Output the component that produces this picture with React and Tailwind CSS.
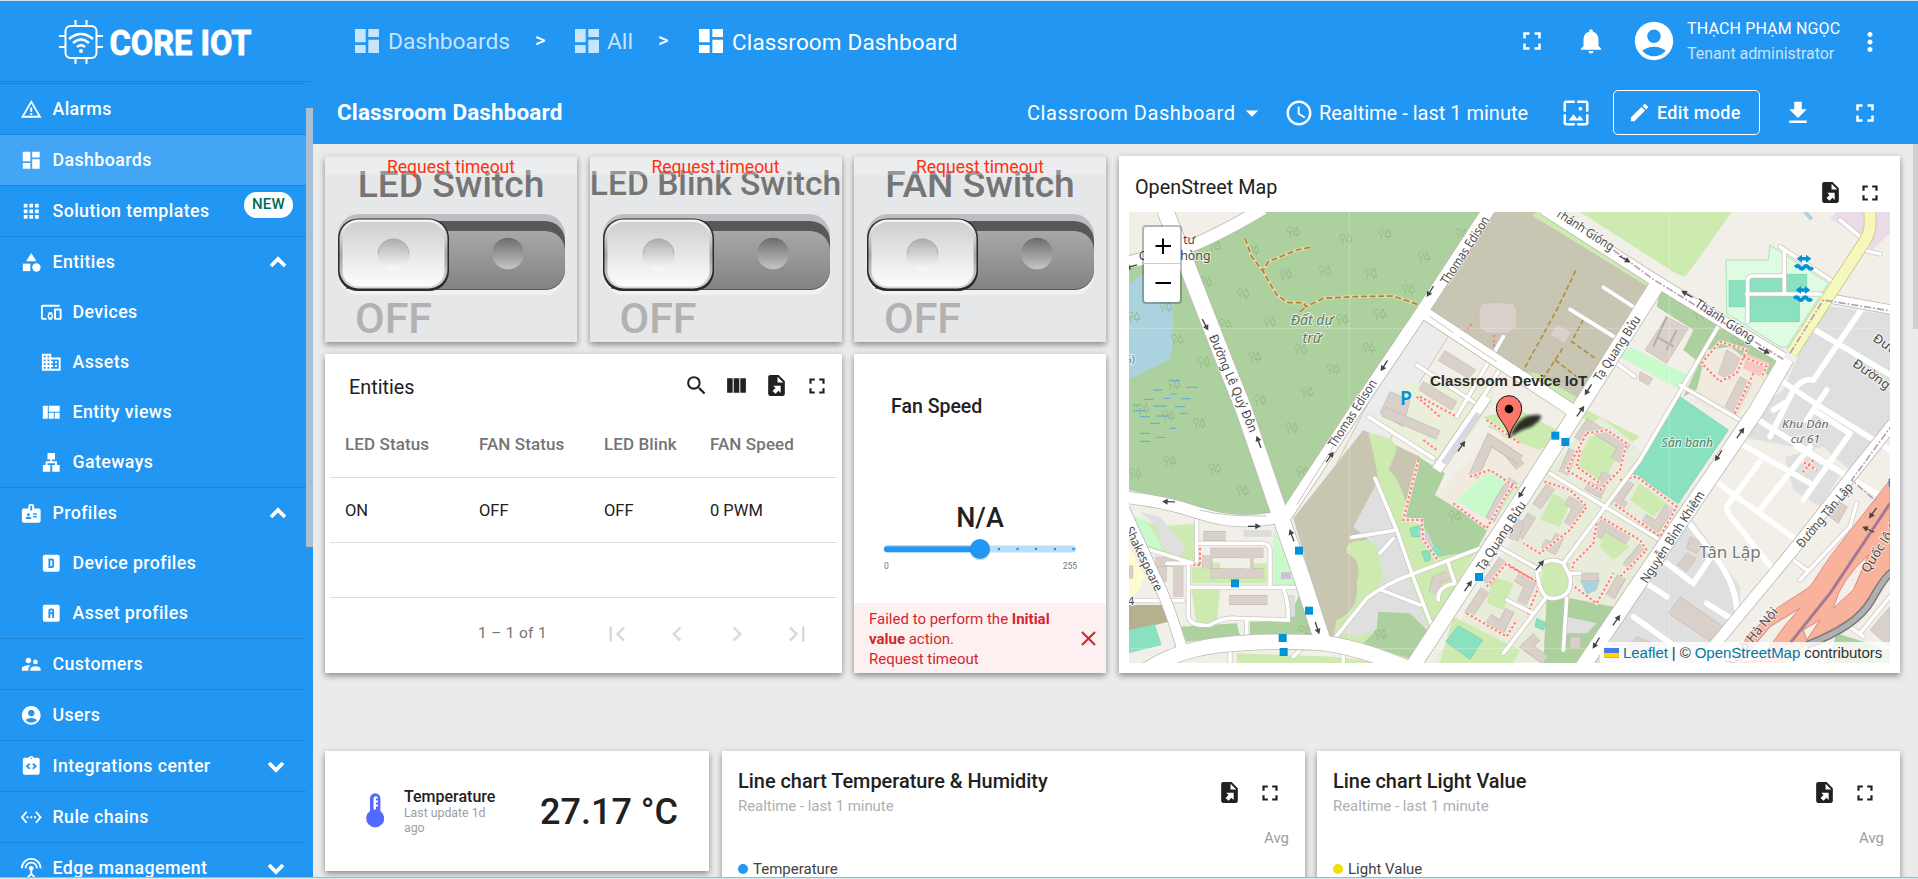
import React from "react";
import {
  MdWarningAmber, MdDashboard, MdApps, MdCategory, MdDevicesOther, MdDomain, MdViewQuilt, MdLan, MdBadge,
  MdSupervisorAccount, MdAccountCircle, MdIntegrationInstructions, MdSettingsEthernet, MdSettingsInputAntenna,
  MdFullscreen, MdNotifications, MdMoreVert, MdArrowDropDown, MdAccessTime, MdWallpaper, MdEdit, MdFileDownload,
  MdSearch, MdViewColumn, MdFirstPage, MdChevronLeft, MdChevronRight, MdLastPage, MdClose,
} from "react-icons/md";

const FileExport = ({ size = 25 }) => (
  <svg width={size} height={size} viewBox="0 0 24 24" fill="currentColor">
    <path d="M6 2c-1.1 0-2 .9-2 2v16c0 1.1.9 2 2 2h12c1.1 0 2-.9 2-2V8l-6-6H6m7 1.5L18.5 9H13V3.5m-4.07 8.72H16v7.05l-2.12-2.12L11.05 20l-2.83-2.83 2.83-2.83-2.12-2.12z" />
  </svg>
);

const BoxD = ({ size }) => (
  <svg width={size} height={size} viewBox="0 0 24 24" fill="currentColor" fillRule="evenodd">
    <path d="M5 3h14a2 2 0 0 1 2 2v14a2 2 0 0 1-2 2H5a2 2 0 0 1-2-2V5a2 2 0 0 1 2-2zM9 7v10h4a2 2 0 0 0 2-2V9a2 2 0 0 0-2-2H9zM11 9h2v6h-2V9z" />
  </svg>
);
const BoxA = ({ size }) => (
  <svg width={size} height={size} viewBox="0 0 24 24" fill="currentColor" fillRule="evenodd">
    <path d="M5 3h14a2 2 0 0 1 2 2v14a2 2 0 0 1-2 2H5a2 2 0 0 1-2-2V5a2 2 0 0 1 2-2zM11 7a2 2 0 0 0-2 2v8h2v-4h2v4h2V9a2 2 0 0 0-2-2h-2zM11 9h2v2h-2V9z" />
  </svg>
);

const menu = [
  { icon: MdWarningAmber, label: "Alarms" },
  { icon: MdDashboard, label: "Dashboards", active: true },
  { icon: MdApps, label: "Solution templates", badge: true },
  {
    icon: MdCategory, label: "Entities", open: true,
    children: [
      { icon: MdDevicesOther, label: "Devices" },
      { icon: MdDomain, label: "Assets" },
      { icon: MdViewQuilt, label: "Entity views" },
      { icon: MdLan, label: "Gateways" },
    ],
  },
  {
    icon: MdBadge, label: "Profiles", open: true,
    children: [
      { icon: BoxD, label: "Device profiles" },
      { icon: BoxA, label: "Asset profiles" },
    ],
  },
  { icon: MdSupervisorAccount, label: "Customers" },
  { icon: MdAccountCircle, label: "Users" },
  { icon: MdIntegrationInstructions, label: "Integrations center", closed: true },
  { icon: MdSettingsEthernet, label: "Rule chains" },
  { icon: MdSettingsInputAntenna, label: "Edge management", closed: true },
];

function Chevron({ up }) {
  return (
    <svg width="18" height="18" viewBox="0 0 18 18" fill="none" stroke="white" strokeWidth="3.8">
      <path d={up ? "M2 13 L9 6 L16 13" : "M2 6 L9 13 L16 6"} />
    </svg>
  );
}

function Sidebar() {
  return (
    <aside className="flex h-[877px] w-[313px] shrink-0 flex-col overflow-hidden bg-[#2196f3] text-white">
      <div className="flex h-[81px] shrink-0 items-center border-b border-[#1d84d6] pl-[58px] pt-[2px]">
        <svg width="200" height="60" viewBox="0 -6 200 60" fill="none" stroke="white" strokeWidth="2">
          <rect x="7.500" y="8" width="31" height="32" rx="5" />
          <path d="M17.500 2v6M28.500 2v6M17.500 40v6M28.500 40v6M1 18h6M1 29h6M39 18h6M39 29h6" />
          <path d="M11 21q12-10 24 0M15 25q8-7 16 0M19 29q4-3.500 8 0" strokeWidth="2.600" />
          <circle cx="23" cy="33" r="2" fill="white" stroke="none" />
          <text x="51.500" y="36.500" fill="white" stroke="white" strokeWidth="0.900" fontSize="34.500" fontWeight="700" textLength="142" lengthAdjust="spacingAndGlyphs">CORE IOT</text>
        </svg>
      </div>
      <div className="flex min-h-0 flex-1">
        <nav className="w-[306px] shrink-0 overflow-hidden pt-px">
          {menu.map((m) => (
            <div key={m.label} className="border-t border-[#1d84d6]">
              <div className={"flex h-[50px] items-center pl-[20px] pr-[19px] " + (m.active ? "bg-[#42a5f5]" : "")}>
                <m.icon size={22.5} className="shrink-0" />
                <span className="ml-[10px] whitespace-nowrap text-[17.8px] font-medium tracking-[0.4px]">{m.label}</span>
                {m.badge && (
                  <span className="ml-auto -mr-[6px] mb-[13px] flex h-[26px] w-[49px] items-center justify-center rounded-full bg-white text-[15px] font-medium tracking-[0.3px] text-[#00695c]">
                    NEW
                  </span>
                )}
                {m.open && <span className="ml-auto"><Chevron up /></span>}
                {m.closed && <span className="ml-auto mr-[2px]"><Chevron /></span>}
              </div>
              {(m.children || []).map((c) => (
                <div key={c.label} className="flex h-[50px] items-center pl-[40px]">
                  <c.icon size={22.5} />
                  <span className="ml-[10px] text-[17.8px] font-medium tracking-[0.4px]">{c.label}</span>
                </div>
              ))}
            </div>
          ))}
        </nav>
        <div className="w-[7px] pt-[26px]">
          <div className="h-[439px] bg-[#a9bfd4]" />
        </div>
      </div>
    </aside>
  );
}

function TopBar() {
  return (
    <header className="flex h-[80px] items-center text-white">
      <div className="flex w-[187px] items-center pl-[38px] text-white/75">
        <MdDashboard size={32} className="shrink-0" />
        <span className="ml-[5px] pt-[3px] text-[22.800px]">Dashboards</span>
      </div>
      <span className="ml-[35px] w-[27px] pb-[3px] text-[20px] font-medium">&gt;</span>
      <div className="ml-[9px] flex w-[75px] items-center text-white/75">
        <MdDashboard size={32} className="shrink-0" />
        <span className="ml-[4px] pt-[3px] text-[22.800px]">All</span>
      </div>
      <span className="ml-[12px] w-[27px] pb-[3px] text-[20px] font-medium">&gt;</span>
      <div className="ml-[10px] flex items-center">
        <MdDashboard size={32} />
        <span className="ml-[5px] whitespace-nowrap pt-[3px] text-[22.500px] tracking-[0.150px]">Classroom Dashboard</span>
      </div>
      <div className="ml-auto flex items-center">
        <MdFullscreen size={30} className="mr-[29px]" />
        <MdNotifications size={30} className="mr-[25px]" />
        <MdAccountCircle size={46} className="mr-[10px]" />
        <div className="w-[168px]">
          <div className="h-[25px] whitespace-nowrap text-[16px] leading-[24px] tracking-[0.150px]">THẠCH PHẠM NGỌC</div>
          <div className="h-[24px] whitespace-nowrap text-[16px] leading-[23px] tracking-[-0.050px] text-white/75">Tenant administrator</div>
        </div>
        <MdMoreVert size={30} className="mr-[33px] mt-px" />
      </div>
    </header>
  );
}

function ToolBar() {
  return (
    <div className="flex h-[63px] items-center pl-[24px] text-white">
      <h1 className="text-[22.500px] font-bold tracking-[0.120px]">Classroom Dashboard</h1>
      <div className="ml-auto flex items-center">
        <span className="w-[210px] whitespace-nowrap text-[20px] tracking-[0.550px]">Classroom Dashboard</span>
        <MdArrowDropDown size={30} />
        <MdAccessTime size={30} className="ml-[17px]" />
        <span className="ml-[5px] w-[210px] whitespace-nowrap text-[20px]">Realtime - last 1 minute</span>
        <MdWallpaper size={30} className="ml-[32px]" />
        <button className="ml-[22px] flex h-[45px] w-[147px] items-center rounded-[5px] border border-white pl-[14px] text-[18px] font-medium">
          <MdEdit size={23} />
          <span className="ml-[6px] whitespace-nowrap tracking-[0.300px]">Edit mode</span>
        </button>
        <MdFileDownload size={30} className="ml-[23px]" />
        <MdFullscreen size={30} className="ml-[37px] mr-[38px]" />
      </div>
    </div>
  );
}

const card = "bg-white shadow-[0_3px_6px_rgba(0,0,0,0.36),0_0_8px_rgba(0,0,0,0.07)] ";

function SwitchCard({ id, title, small }) {
  return (
    <section className={card + "relative flex h-[186px] w-[252px] flex-col items-center !bg-[#e6e7e9]"}>
      <div className={"flex h-[56px] items-end justify-center whitespace-nowrap pb-px font-medium text-[#757575] " + (small ? "text-[33.600px] leading-[54px]" : "text-[37.200px] leading-[54px]")}>
        {title}
      </div>
      <svg width="230" height="84" viewBox="0 0 230 84" className="mt-px">
        <defs>
          <linearGradient id={id + "o"} x1="0" y1="0" x2="0" y2="1"><stop offset="0.300" stopColor="#bdbcc0" /><stop offset="0.800" stopColor="#f1f1f2" /></linearGradient>
          <linearGradient id={id + "t"} x1="0" y1="0" x2="0" y2="1"><stop offset="0" stopColor="#a8a8a8" /><stop offset="1" stopColor="#838383" /></linearGradient>
          <linearGradient id={id + "k"} x1="0" y1="0" x2="0" y2="1"><stop offset="0" stopColor="#cfcfcf" /><stop offset="1" stopColor="#fdfdfd" /></linearGradient>
          <linearGradient id={id + "e"} x1="0" y1="0" x2="0" y2="1"><stop offset="0" stopColor="#f8f8f8" /><stop offset="0.500" stopColor="#a5a5a5" /><stop offset="1" stopColor="#d8d8d8" /></linearGradient>
          <linearGradient id={id + "d"} x1="0" y1="0" x2="0" y2="1"><stop offset="0" stopColor="#adadad" /><stop offset="1" stopColor="#fbfbfb" /></linearGradient>
          <linearGradient id={id + "r"} x1="0" y1="0" x2="0" y2="1"><stop offset="0" stopColor="#6c6c6c" /><stop offset="1" stopColor="#c6c6c6" /></linearGradient>
        </defs>
        <rect x="2" y="1" width="227" height="81" rx="21" fill={`url(#${id}o)`} />
        <rect x="10" y="8" width="219" height="69" rx="20" fill="#585858" />
        <path d="M10 18H209a20 20 0 0 1 20 20V56a20 20 0 0 1-20 20H10z" fill={`url(#${id}t)`} />
        <rect x="2" y="5.500" width="111" height="72.500" rx="20" fill="#2a2a2a" />
        <rect x="3.500" y="6.500" width="108" height="69" rx="19" fill={`url(#${id}e)`} />
        <rect x="6.500" y="9" width="102" height="64.500" rx="16" fill={`url(#${id}k)`} />
        <circle cx="57.500" cy="41.500" r="16" fill={`url(#${id}d)`} />
        <path d="M42 41.500a15.500 15.500 0 0 1 31 0" fill="none" stroke="#a9a9a9" strokeWidth="0.800" />
        <circle cx="172" cy="40.500" r="15.800" fill={`url(#${id}r)`} />
      </svg>
      <div className="w-full pl-[30px] text-[43px] font-medium leading-[43px] text-[#b3b1b2]">OFF</div>
      <div className="absolute inset-x-0 top-[2px] h-[17px] bg-white/25 text-center text-[17.500px] leading-[18px] text-[#ff3112]">Request timeout</div>
    </section>
  );
}

function EntitiesCard() {
  const cols = "grid grid-cols-[134px_125px_106px_1fr] pl-[15px] ";
  return (
    <section className={card + "flex h-[319px] w-[517px] flex-col px-[5px] text-[#212121]"}>
      <div className="flex h-[63px] items-center pl-[19px] pr-[7px] text-[20px]">
        <span className="pt-[5px] text-[19.800px]">Entities</span>
        <div className="ml-auto flex gap-[15px] pt-px">
          <MdSearch size={25} /><MdViewColumn size={25} /><FileExport /><MdFullscreen size={26} />
        </div>
      </div>
      <div className={cols + "h-[61px] items-center border-b border-[#dedede] pb-[5px] text-[17px] font-medium tracking-[0.100px] text-[#757575]"}>
        <span>LED Status</span><span>FAN Status</span><span>LED Blink</span><span>FAN Speed</span>
      </div>
      <div className={cols + "h-[65px] items-center border-b border-[#dedede] pt-[2px] text-[16.500px]"}>
        <span>ON</span><span>OFF</span><span>OFF</span><span>0 PWM</span>
      </div>
      <div className="h-[55px] border-b border-[#dedede]" />
      <div className="flex h-[71px] items-center pl-[148px] text-[15.500px] tracking-[0.300px] text-[#757575]">
        <span className="w-[124px]">1 – 1 of 1</span>
        <div className="flex gap-[30px] text-[#dadada]">
          <MdFirstPage size={30} /><MdChevronLeft size={30} /><MdChevronRight size={30} /><MdLastPage size={30} />
        </div>
      </div>
    </section>
  );
}

function FanCard() {
  return (
    <section className={card + "flex h-[319px] w-[252px] flex-col text-[#212121]"}>
      <div className="pl-[37px] pt-[38px] text-[19.500px] font-medium leading-[30px]">Fan Speed</div>
      <div className="mt-[78px] text-center text-[27px] font-medium leading-[36px]">N/A</div>
      <svg width="252" height="24" className="mt-px shrink-0">
        <rect x="30" y="8.500" width="192" height="7" rx="3.500" fill="#bbdefb" />
        <rect x="30" y="8.500" width="96" height="7" rx="3.500" fill="#90caf9" />
        <rect x="30" y="9.500" width="96" height="5.500" rx="2.750" fill="#2196f3" />
        {[145, 163.500, 182, 201, 219.500].map((x) => <circle key={x} cx={x} cy="12" r="1.300" fill="#2196f3" />)}
        <circle cx="126" cy="12.800" r="10.400" fill="#1976d2" opacity="0.250" />
        <circle cx="126" cy="12" r="10" fill="#2196f3" />
      </svg>
      <div className="flex justify-between pl-[30px] pr-[29px] text-[8.500px] leading-[10px] text-[#757575]"><span>0</span><span>255</span></div>
      <div className="mt-auto flex h-[70px] items-center rounded-[4px] bg-[#fdf0f0] pl-[15px] pt-px text-[15px] leading-[20px] text-[#d12730]">
        <div className="w-[207px]">Failed to perform the <b className="font-bold">Initial value</b> action.<br />Request timeout</div>
        <MdClose size={25} className="shrink-0" />
      </div>
    </section>
  );
}

/* ---------- Map ---------- */
const trees = [
  [285, 288], [400, 300], [520, 245], [678, 266], [795, 252], [1025, 250], [912, 320], [498, 372], [615, 362], [753, 370], [866, 418],
  [370, 430], [258, 396], [42, 500], [316, 522], [450, 516], [668, 508], [780, 492], [138, 470], [172, 568], [252, 635], [405, 620],
  [543, 598], [640, 657], [747, 594], [562, 725], [420, 750], [162, 702], [70, 775], [146, 797], [238, 820], [515, 833], [150, 932],
  [285, 955], [46, 970], [368, 1022], [548, 965], [1005, 1098], [555, 1442], [782, 1453], [1740, 492], [1855, 574],
];
const Tree = ({ x, y }) => (
  <g transform={`translate(${x} ${y})`} fill="none" stroke="#92b886" strokeWidth="2.600">
    <path d="M-10 -14a8 8 0 1 0 .1 0M-10 4V17M9 -15L0 8H18ZM9 8V17" />
  </g>
);
const major = [
  ["M135 180L195 330L300 600L372 780L480 1095L545 1280L610 1480", 48],
  ["M10 340Q120 315 190 295T430 176", 36],
  ["M1108 176L905 486L700 790L495 1100", 36],
  ["M1270 176L1600 388L1990 625", 34],
  ["M875 1555L1180 1085L1400 740L1620 390", 44],
  ["M1385 1555L1570 1280L1910 780L2000 625", 44],
  ["M900 480L1090 605L1385 800", 36],
  ["M10 1042Q120 1050 240 1090T490 1098", 34],
  ["M80 1560Q170 1500 300 1485T600 1478Q720 1490 900 1570", 44],
  ["M5 1060L110 1290Q150 1370 190 1510", 30],
  ["M1730 1550L2020 1200L2200 970L2320 820", 32],
  ["M2100 440L2320 480", 26],
  ["M950 960L1100 740", 30],
];
const minor = [
  "M230 1110V1235M60 1190L220 1240H205V1400Q210 1430 270 1425Q310 1400 350 1405L505 1410Q505 1350 490 1315M205 1312H540M240 1180H430Q450 1185 450 1200V1310M140 1240H210M27 1352H190M380 1410V1470",
  "M765 985L830 1140Q880 1290 940 1440M695 1162L820 1142M780 1210L820 1165M640 1470L740 1345Q800 1300 870 1275L1080 1195M780 1318L900 1365M985 1240L1005 1300Q950 1310 955 1350",
  "M745 800L940 925M890 645L1090 775M1150 560L1010 800M1150 640L1090 740",
  "M1450 412L1540 470M1350 478L1490 565M1490 640L1545 680",
  "M1800 520L1560 930L1330 1240M1680 705L1860 810M1290 970L1620 1170M1100 1170L1260 1260M1330 1240Q1280 1215 1250 1260Q1260 1350 1300 1345Q1360 1340 1350 1280ZM1350 1270H1380M1340 1345L1330 1500M1160 1350L1240 1390M1150 1510L1280 1340",
  "M1980 290L2140 395M1993 300V430M1883 515V390Q1883 380 1895 378H1990M1880 432H2100",
  "M2085 540L2320 680M2230 470L2080 690Q2040 680 2010 740L1950 860M1980 690L2100 770L2310 900M2120 720L2060 810M2030 890L2320 1060",
  "M1860 880L2070 1000M1920 935L1820 1070Q1820 1090 1840 1110L1960 1260M1780 990L2030 1170M2190 850L2050 1050M2070 890L1920 1080M1900 800L2200 990M1960 780L1990 760M2080 780L2190 850",
  "M1700 1110L1800 1240Q1860 1330 1850 1420M1640 1240L1720 1300L1780 1210M1540 1400L1680 1500M1580 1300L1640 1340M1760 1360L1840 1410",
  "M2210 1060L2190 1130L2040 1290M2020 1230L2060 1260M2220 1450L2310 1340M2190 1430L2230 1460",
  "M2160 210L2220 260M2230 300L2280 312M330 1480V1540M520 1520L540 1500M670 1490V1540",
];
const blocks10 = [
  "M160 190L190 120", "M205 90L235 45L340 110L315 150", "M230 225L265 245L290 190", "M345 290L320 275L360 215", "M400 325L440 350L480 290",
  "M80 290L122 230", "M170 270L205 290L175 345", "M25 380L65 315", "M100 400L130 415L150 375", "M260 380L280 345L355 390", "M350 470L400 410",
  "M300 560L335 500", "M20 500L60 525L35 580", "M80 680L50 710L105 750", "M-10 120L30 170", "M-60 330L-30 270L10 210",
];
const blocks9 = [
  "M270 428H430M270 490H430M385 430V490M262 435V475", "M328 570H442", "M175 465V560M105 455H185M125 470V515", "M250 378H318",
  "M790 5L955 75", "M1060 200L1110 90L1200 150", "M940 550L950 510L985 495", "M1100 520L1150 450", "M1045 615L1095 540", "M1105 625L1145 650L1170 600", "M1180 390L1200 330",
];
const reds = [
  "M1745 640L1800 575L1880 600L1850 670L1800 695ZM1870 620L1940 650L1925 680M1900 670L1840 800",
  "M895 930L850 1110H905L910 1170L960 1240M1050 980L1110 960L1200 1020M1000 1060L1100 1135L1180 1000M900 740L1010 800M890 740L960 800M910 870L950 900",
  "M1400 850L1460 840L1520 880L1500 960L1440 1020L1340 960ZM1500 990L1550 980L1670 1070L1620 1160L1480 1060M1260 990L1350 1020L1400 1070L1350 1140L1260 1210L1210 1180M1440 1100L1560 1170L1580 1200L1500 1280M1430 1120L1420 1180L1360 1240L1350 1300L1430 1360L1480 1270M1170 1250L1260 1300L1220 1400M1040 1390L1160 1460L1190 1410M1100 1310L1160 1240L1240 1290M1100 810L1200 880M1380 900L1370 950L1440 1000M240 1180V1250M205 1245H240M2040 930L2090 960M2080 930L2045 970",
];
const Arrow = ({ x, y, a }) => (
  <g transform={`translate(${x} ${y}) rotate(${a})`} stroke="#444" strokeWidth="4" fill="#444">
    <path d="M-20 0H4" /><path d="M2 -9L19 0L2 9Z" stroke="none" />
  </g>
);
const Label = ({ x, y, a = 0, s = 38, children, fill = "#4a4a4a", w, italic }) => (
  <text transform={`translate(${x} ${y}) rotate(${a})`} textAnchor="middle" fontSize={s} fill={fill} stroke="#ffffff" strokeOpacity="0.650" strokeWidth="6" paintOrder="stroke" textLength={w} lengthAdjust="spacingAndGlyphs" fontStyle={italic ? "italic" : "normal"}>{children}</text>
);

function OsmMap() {
  return (
    <svg width="761" height="451" viewBox="27 186 2283 1353" fontFamily="'Noto Sans', sans-serif" className="block">
      <defs><filter id="soft" x="-50%" y="-50%" width="200%" height="200%"><feGaussianBlur stdDeviation="5" /></filter></defs>
      <rect x="27" y="186" width="2283" height="1353" fill="#f2efe9" />
      {/* land cover */}
      <path d="M27 350L190 310L320 250L430 186H1090L500 1090L370 1110L200 1060L27 1020Z" fill="#add19e" />
      <path d="M27 405L66 372L158 440V590L150 628L27 688Z" fill="#aad3df" />
      <path d="M1125 186H1280L1600 395L1380 780L920 475Z" fill="#c8c6b3" />
      <path d="M1250 186H1290L1600 390L1585 410L1235 196Z" fill="#cdebb0" />
      <path d="M1380 186H1835L1740 320L1695 380L1670 372Z" fill="#cdebb0" />
      <path d="M1620 420L1990 640L1950 720L1800 680L1690 740L1790 530Z" fill="#add19e" />
      <path d="M1630 440L1700 480L1760 560L1740 640L1680 700L1530 640L1570 530Z" fill="#f2efe9" />
      <path d="M1620 420L1815 530L1740 640L1690 600L1720 540L1610 470Z" fill="#add19e" />
      <path d="M1530 590L1715 680L1670 715L1500 620Z" fill="#c8facc" />
      <path d="M1500 640L1680 740L1540 900L1420 800Z" fill="#f2efe9" />
      <path d="M1760 600L1830 590L1950 680L1850 800L1720 760Z" fill="#f0eadf" />
      <path d="M1818 330H1945L1950 285L2125 400L2000 592L1980 590L1820 490Z" fill="#dffce2" stroke="#a5e5b5" strokeWidth="3" />
      <path d="M1827 392H1880V470H1827ZM1890 383H1985V425H1890ZM1998 373H2060V425H1998ZM1890 437H2038V515H1890Z" fill="#8ae1bf" stroke="#72cda9" strokeWidth="2" />
      <path d="M2150 186H2310V250L2255 300L2220 262L2130 205Z" fill="#ebdbe8" />
      <path d="M2100 465L2310 495V840L2200 970L2120 900L1990 720Z" fill="#dfdfdf" />
      <path d="M1990 720L2150 880L2070 900L1860 860L1910 780Z" fill="#e0dfdf" />
      <path d="M1995 920L2080 900L2170 960L2100 1070L2020 1020Z" fill="#e0dfdf" />
      <path d="M1700 1100L1720 1110L1860 1310V1400L1750 1539H1400L1550 1310Z" fill="#dfdfdf" />
      <path d="M905 500L985 560L840 790L790 930L650 940L760 730Z" fill="#ececec" stroke="#d7c6ad" strokeWidth="3" />
      <path d="M520 1105L730 840L900 920L860 1100L790 1290L650 1450L625 1470Z" fill="#c8c5b1" />
      <path d="M745 850Q830 860 830 900L805 960Q845 985 870 1110L1070 1200L880 1530L640 1460L650 1410Q720 1380 710 1300Q730 1230 680 1210Q670 1170 740 1170L790 1060L775 990Q760 900 745 850Z" fill="#cdebb0" />
      <path d="M770 1000L830 1140L870 1290L930 1450L880 1500L770 1440L700 1460L660 1440L770 1320L790 1280L770 1190L700 1130Z" fill="#dfdfdf" />
      <path d="M775 1385L870 1390L930 1450L880 1530L730 1480L770 1440Z" fill="#add19e" />
      <path d="M895 920L975 970L945 1035L1105 1135L1070 1200L960 1220L900 1110L850 1100Z" fill="#add19e" />
      <path d="M1100 880L1200 850L1290 900L1105 1135L950 1035Z" fill="#f0eadf" />
      <path d="M1110 960L1200 1000L1120 1120L1010 1050Z" fill="#c8facc" />
      <path d="M1090 800L1180 780L1290 850L1260 900L1150 860Z" fill="#cdebb0" />
      <path d="M1370 800L1170 660L1250 670L1400 760Z" fill="#cdebb0" />
      <path d="M870 700L1010 690L1130 690L1120 760L1050 860L960 940L780 820L800 740Z" fill="#e9efd8" />
      <path d="M1100 830L1200 780L1330 850L1290 900L1180 860Z" fill="#cdebb0" />
      <path d="M1400 780L1560 860L1530 880L1380 800Z" fill="#cdebb0" />
      <path d="M1380 850L1440 800L1530 870L1700 1060L1560 1330L1400 1530L1100 1539L940 1539L1200 1130L1290 960Z" fill="#e8eddb" />
      <path d="M1410 860L1470 850L1500 900L1450 1000L1360 950Z M1560 1000L1640 1060L1600 1100L1530 1050ZM1300 1030L1350 1060L1320 1130L1260 1110ZM1450 1140L1530 1190L1480 1230L1440 1190ZM1120 1280L1180 1300L1150 1380L1100 1360ZM1000 1400L1200 1500L1180 1540H960ZM1270 1240L1350 1240L1350 1340H1260Z" fill="#cdebb0" />
      <path d="M1280 1345H1350L1480 1370L1395 1539H1270Z" fill="#add19e" /><path d="M1340 1400L1430 1420L1400 1450H1340Z" fill="#dfdfdf" />
      <path d="M1380 1290H1440L1430 1320L1400 1335Z" fill="#aad3df" />
      <path d="M1680 740L1825 840L1675 1060L1530 965Z" fill="#8ae1bf" stroke="#72cda9" strokeWidth="2" />
      <path d="M1015 1427L1088 1470L1050 1528L977 1475ZM1250 1405L1280 1420L1270 1440L1245 1430ZM870 1135L905 1125L900 1160L875 1160ZM905 1205L930 1200L930 1230L915 1235ZM935 1195L950 1185L968 1210L950 1225Z" fill="#8ae1bf" stroke="#72cda9" strokeWidth="2" />
      <path d="M27 1095L120 1130L230 1120V1240L70 1200L27 1120Z" fill="#cdebb0" />
      <path d="M27 1095L80 1110L130 1200L60 1180Z" fill="#c8facc" /><path d="M60 1085L120 1100L195 1190L180 1220L130 1195L110 1130Z" fill="#dfdfdf" />
      <path d="M460 1130L530 1305H460Z" fill="#c8facc" /><path d="M215 1240H440V1300H215ZM215 1320H300L290 1420L230 1430Z" fill="#cdebb0" />
      <path d="M180 1430L350 1420L360 1455L200 1475ZM390 1415L500 1415L540 1330L590 1450L390 1455Z" fill="#add19e" />
      <path d="M27 1190L75 1280L50 1330L27 1340Z" fill="#fdfcd0" /><path d="M27 1365H130L145 1415L27 1445Z" fill="#b5b18d" />
      <path d="M27 1440L105 1423L125 1485L27 1510Z" fill="#8ae1bf" /><path d="M350 1510L640 1520L800 1539H350Z" fill="#cdebb0" />
      <path d="M370 1140H455V1160H370ZM505 1335H525V1400H505Z" fill="#dddcdc" /><path d="M483 1267H512V1287H483Z" fill="#d7b9dc" />
      <path d="M895 1140L925 1150L940 1190L915 1190L900 1165Z" fill="#d3cfdd" />
      <path d="M2150 1450L2310 1500V1539H2120Z" fill="#add19e" />
      {/* buildings */}
      <g fill="#d9d0c9" stroke="#c5b9af" strokeWidth="2">
        <path d="M1085 460Q1130 455 1180 460L1190 480V530L1165 550H1100L1077 530V480Z" />
        <path d="M1640 500L1705 535L1640 640L1575 600Z" /><path d="M1310 522L1355 545L1335 580L1290 555Z" />
        <path d="M975 602L1068 660L1045 685L955 632ZM910 695L1010 755L995 780L897 720ZM810 725L870 750L850 830L780 790Z" />
        <path d="M1560 665L1598 685L1585 705L1558 690ZM1820 600L1860 625L1830 690L1795 672ZM1860 680L1895 700L1850 790L1815 770Z" />
        <path d="M1680 1340L1810 1430L1780 1480L1645 1390ZM1550 1460L1600 1480L1570 1530L1520 1500ZM1700 1210L1728 1225L1700 1265L1672 1245ZM1710 1160L1750 1180L1730 1210L1700 1195Z" />
        <path d="M2155 1055L2182 1070L2155 1120L2128 1100ZM2250 1440L2310 1370V1490ZM1350 1460H1382V1495H1350ZM1385 1270H1435V1292H1385ZM27 1248H38V1285H27Z" />
      </g>
      <path d="M1880 610L1950 640L1930 685L1870 655Z" fill="#f5c9c2" /><path d="M1640 500L1600 590M1670 540L1640 600M1610 560L1660 590" stroke="#b9aca3" strokeWidth="6" fill="none" />
      <g transform="translate(1170 780)" fill="none">{blocks10.map((d) => <g key={d}><path d={d} stroke="#c5b9af" strokeWidth="30" /><path d={d} stroke="#d9d0c9" strokeWidth="26" /></g>)}</g>
      <g transform="translate(0 780)" fill="none">{blocks9.map((d) => <g key={d}><path d={d} stroke="#c5b9af" strokeWidth="30" /><path d={d} stroke="#d9d0c9" strokeWidth="26" /></g>)}</g>
      <path d="M430 1225H390V1255H300V1225H385Z" fill="#f2efe9" />
      {trees.map(([x, y]) => <Tree key={x + "-" + y} x={x} y={y} />)}
      <path d="M150 692h30M200 712h32M100 720h26M150 732h20M70 748h30M130 745h22M184 746h28M40 766h20M100 768h40M165 770h30M40 782h36M110 798h40M180 790h22M60 800h30M90 820h30M150 835h20M60 850h28M110 862h26M60 874h30" stroke="#5fa8d8" strokeWidth="3" fill="none" />
      {/* paths */}
      <path d="M375 265L395 320L430 365L470 435L505 458L550 458L558 470L610 445L700 440L820 438L895 464M570 292L530 300L445 335L430 360M540 485L558 470" fill="none" stroke="#ddd9b8" strokeWidth="10" />
      <path d="M375 265L395 320L430 365L470 435L505 458L550 458L558 470L610 445L700 440L820 438L895 464M570 292L530 300L445 335L430 360M540 485L558 470" fill="none" stroke="#b08327" strokeWidth="5" strokeDasharray="18 8" />
      <path d="M1367 362L1310 480L1205 670M1390 508L1355 575L1430 628M1328 595L1305 630L1270 685M1305 630L1370 680" fill="none" stroke="#b08f40" strokeWidth="5" strokeDasharray="16 8" />
      <g fill="none" stroke="#fbe9e4" strokeWidth="10">{reds.map((d) => <path key={d} d={d} />)}</g>
      <g fill="none" stroke="#f97f73" strokeWidth="6" strokeDasharray="7 7">{reds.map((d) => <path key={d} d={d} />)}<path d="M1055 522L1030 550M1122 555V610" /></g>
      {/* roads */}
      <g fill="none" stroke="#c9c4be" strokeWidth="15" strokeLinecap="round">{minor.map((d) => <path key={d} d={d} />)}</g>
      <g fill="none" stroke="#ffffff" strokeWidth="11" strokeLinecap="round">{minor.map((d) => <path key={d} d={d} />)}</g>
      <g fill="none" stroke="#ffffff" strokeWidth="17" strokeLinecap="round">{minor.slice(6, 9).map((d) => <path key={d} d={d} />)}</g>
      <g fill="none" strokeLinejoin="round">
        {major.map(([d, w]) => <path key={d} d={d} stroke="#bfbab4" strokeWidth={w + 5} />)}
        <path d="M1850 1539L1880 1460L1970 1375L2070 1310L2130 1220L2310 990V1265L2200 1400L2060 1480L1970 1560Z" fill="#f9b29c" stroke="#dd9080" strokeWidth="3" />
        {major.map(([d, w]) => <path key={d} d={d} stroke="#ffffff" strokeWidth={w} />)}
        <path d="M2250 176V225Q2250 250 2230 280L2015 610" stroke="#c5c795" strokeWidth="38" />
        <path d="M2250 176V225Q2250 250 2230 280L2015 610" stroke="#f5f8ba" strokeWidth="33" />
      </g>
      <path d="M930 500L1000 548M1020 562L1130 635M530 1065L640 890M240 1080Q310 1100 440 1098" fill="none" stroke="#c9c4be" strokeWidth="3" />
      <path d="M1860 1539L1950 1430L2040 1375L2000 1420L1920 1530ZM2140 1375Q2160 1290 2245 1215L2200 1320ZM2050 1440L2100 1410L2060 1470Z" fill="#f2efe9" stroke="#d98a7a" strokeWidth="3" />
      <path d="M2010 1480L2130 1330L2310 1060" fill="none" stroke="#b78492" strokeWidth="10" />
      <path d="M2010 1480L2130 1330L2310 1060" fill="none" stroke="#8e6a8e" strokeWidth="3" />
      <path d="M2060 1485Q2210 1430 2255 1350T2320 1265" fill="none" stroke="#777777" strokeWidth="24" />
      <path d="M2060 1485Q2210 1430 2255 1350T2320 1265" fill="none" stroke="#b0b0b0" strokeWidth="16" />
      <path d="M1480 300L1600 388L1990 628M2010 610L2110 450L2320 484M2320 820L2195 990L2270 1055" fill="none" stroke="#b99dbb" strokeWidth="5" strokeDasharray="22 6 5 6" />
      <path d="M1075 790L970 940" stroke="#d7d7e5" strokeWidth="16" fill="none" />
      <path d="M2055 186L2075 208" stroke="#aad3df" strokeWidth="12" />
      <path d="M688 186V1539M1648 186V1539M27 535H2310M27 1496H2310" stroke="#fff" strokeOpacity="0.350" strokeWidth="2.500" />
      {[[256, 525, 62], [930, 425, 122], [792, 648, 122], [416, 875, 250], [630, 920, 305], [145, 1055, 182], [404, 1129, 0], [515, 1155, 250], [592, 1435, 72], [1025, 888, 305], [1515, 328, 30], [1700, 432, 210], [1933, 602, 28], [1404, 720, 122], [1382, 783, 305], [1205, 1028, 122], [1045, 1307, 305], [1862, 848, 305], [1795, 918, 122], [1490, 1410, 305], [1428, 1480, 122], [1260, 1245, 310], [2258, 1090, 125], [2244, 1138, 205], [32, 350, 165]].map(([x, y, a]) => <Arrow key={x} x={x} y={y} a={a} />)}
      <g fill="#0092da">{[[537, 1202], [345, 1300], [567, 1382], [488, 1464], [491, 1506], [1077, 1281], [1306, 857], [1336, 876], [2318, 998]].map(([x, y]) => <rect key={x} x={x - 12} y={y - 12} width="24" height="24" />)}</g>
      {[[2052, 336], [2049, 430]].map(([x, y]) => (
        <g key={y} transform={`translate(${x} ${y})`} fill="none" stroke="#0092da" strokeWidth="10">
          <path d="M-12 -10H12" /><path d="M-6 -22L-22 -10L-6 2ZM6 -22L22 -10L6 2Z" fill="#0092da" stroke="none" />
          <path d="M-26 16q7 -9 13 0t13 0t13 0t13 0" strokeWidth="11" />
        </g>
      ))}
      {/* labels */}
      <Label x={170} y={282} s={36} w={112}>Đầu tư</Label><Label x={164} y={329} s={36} w={216}>Công phòng</Label>
      <Label x={576} y={526} s={42} fill="#5f7a5c" italic>Đất dự</Label><Label x={576} y={580} s={42} fill="#5f7a5c" italic>trữ</Label>
      <Label x={1046} y={308} a={-57} w={235}>Thomas Edison</Label><Label x={708} y={798} a={-57} w={235}>Thomas Edison</Label>
      <Label x={328} y={705} a={67} w={315}>Đường Lê Quý Đôn</Label>
      <Label x={1388} y={250} a={33} w={200}>Thánh Gióng</Label><Label x={1808} y={523} a={33} w={205}>Thánh Gióng</Label>
      <Label x={1502} y={602} a={-57} w={225}>Tạ Quang Bửu</Label><Label x={1154} y={1165} a={-57} w={240}>Tạ Quang Bửu</Label>
      <Label x={1668} y={1168} a={-57} w={320}>Nguyễn Bỉnh Khiêm</Label><Label x={2124} y={1104} a={-50} w={240}>Đường Tân Lập</Label>
      <Label x={60} y={1232} a={64} w={210}>Shakespeare</Label>
      <Label x={1702} y={890} s={36} w={155} fill="#4c8470" italic>Sân banh</Label>
      <Label x={2056} y={835} s={34} w={140} fill="#686868" italic>Khu Dân</Label><Label x={2056} y={878} s={34} w={88} fill="#686868" italic>cư 61</Label>
      <Label x={1830} y={1224} s={50} w={185} fill="#777777">Tân Lập</Label>
      <Label x={2269} y={698} a={35} w={180}>Đường số</Label><Label x={2330} y={622} a={35} w={180}>Đường số</Label>
      <Label x={1905} y={1470} a={-50} w={220}>Xa lộ Hà Nội</Label><Label x={2290} y={1200} a={-57} w={170}>Quốc lộ 1</Label>
      <Label x={33} y={1366} s={34}>4</Label><Label x={30} y={640} s={34} fill="#5784a8">S)</Label>
      <text x="840" y="766" fontSize="58" fontWeight="600" fill="#0092da">P</text>
      {/* marker */}
      <path d="M1170 862Q1190 800 1240 795T1235 830Q1205 838 1170 862Z" fill="#111" opacity="0.850" filter="url(#soft)" />
      <path d="M1168 864C1165 825 1129 808 1129 775a38 38 0 0 1 76 0C1205 808 1171 825 1168 864Z" fill="#fe7569" stroke="#111" strokeWidth="3" />
      <circle cx="1167" cy="777" r="13" fill="#000" />
      <text x="1166" y="708" textAnchor="middle" fontFamily="'Liberation Sans', sans-serif" fontWeight="700" fontSize="45" fill="#2b2b2b" textLength="472" lengthAdjust="spacingAndGlyphs">Classroom Device IoT</text>
    </svg>
  );
}

function MapCard() {
  return (
    <section className={card + "flex h-[517px] w-[781px] flex-col px-[10px] text-[#212121]"}>
      <div className="flex h-[56px] items-center pl-[6px] pr-[7px]">
        <span className="pt-[8px] text-[19.800px]">OpenStreet Map</span>
        <div className="ml-auto flex gap-[14px] pt-[17px]"><FileExport /><MdFullscreen size={26} /></div>
      </div>
      <div className="relative h-[451px] w-[761px] overflow-hidden">
        <OsmMap />
        <div className="absolute left-[13px] top-[13px] flex w-[40px] flex-col rounded-[4px] border-2 border-black/25 bg-white bg-clip-padding">
          <svg width="36" height="75" viewBox="0 0 36 75" fill="none" stroke="#000" strokeWidth="2"><path d="M11.500 19H27M19 11.500V27M11.500 56H27" /><path d="M0 36.500H36" stroke="#ccc" strokeWidth="1" /></svg>
        </div>
        <div className="absolute bottom-0 right-0 flex h-[21px] w-[290px] items-center whitespace-nowrap bg-white/80 pl-[4px] pt-px font-['Liberation_Sans',sans-serif] text-[15px] tracking-[-0.030px] text-[#333]">
          <svg width="15" height="10" className="mr-[4px] shrink-0"><path d="M0 0H15V5H0Z" fill="#4c7be1" /><path d="M0 5H15V9H0Z" fill="#ffd500" /><path d="M0 9H15V10H0Z" fill="#e0bc00" /></svg>
          <span className="text-[#0078a8]">Leaflet</span><span className="mx-[4px]">|</span>©<span className="ml-[4px] text-[#0078a8]">OpenStreetMap</span><span className="ml-[4px]">contributors</span>
        </div>
      </div>
    </section>
  );
}

function TempCard() {
  return (
    <section className={card + "flex h-[120px] w-[384px] items-center text-[#212121]"}>
      <svg width="18" height="36" viewBox="0 0 18 36" className="ml-[41px]">
        <path d="M4 5.500a5.200 5.200 0 0 1 10.400 0V18a9 9 0 1 1-10.400 0Z" fill="#5469ff" />
        <path d="M7.500 5.500a2.200 2.200 0 0 1 4.500 0H10V7.500H12V9.500H10V11.500H12V13.500H10V16.500H7.500Z" fill="#fff" />
      </svg>
      <div className="ml-[20px] w-[136px] pt-px">
        <div className="text-[16px] font-medium leading-[18px]">Temperature</div>
        <div className="w-[100px] text-[12.300px] leading-[15px] text-[#9e9e9e]">Last update 1d<br />ago</div>
      </div>
      <div className="whitespace-nowrap pt-[2px] text-[36px] font-medium">27.17 °C</div>
    </section>
  );
}

function ChartCard({ title, legend, yellow }) {
  return (
    <section className={card + "flex h-[300px] w-[583px] flex-col px-[16px] text-[#212121]"}>
      <div className="flex h-[72px]">
        <div className="pt-[18px]">
          <div className="text-[19.900px] font-medium leading-[26px]">{title}</div>
          <div className="text-[15px] leading-[23px] tracking-[-0.050px] text-[#b0b0b0]">Realtime - last 1 minute</div>
        </div>
        <div className="ml-auto mr-[6px] flex gap-[15px] pt-[29px]"><FileExport /><MdFullscreen size={26} /></div>
      </div>
      <div className="flex h-[32px] items-center justify-end text-[15px] text-[#9e9e9e]"><span className="pb-px">Avg</span></div>
      <div className="flex h-[28px] items-center text-[15px] text-[#424242]">
        <span className={"mr-[5px] h-[10px] w-[10px] rounded-full " + (yellow ? "bg-[#f5dd00]" : "bg-[#2196f3]")} />
        <span className="pt-px">{legend}</span>
      </div>
    </section>
  );
}

export default function App() {
  return (
    <div className="flex h-[879px] w-[1918px] flex-col overflow-hidden bg-[#2196f3] font-['Roboto',sans-serif]">
      <div className="flex h-[877px] shrink-0 overflow-hidden border-t border-[#d5e1ea]">
        <Sidebar />
        <main className="flex min-w-0 flex-1 flex-col">
          <div className="h-[143px] shrink-0 bg-[#2196f3]">
            <TopBar />
            <ToolBar />
          </div>
          <div className="flex min-h-0 flex-1 overflow-hidden bg-[#ebebeb]">
            <div className="flex w-[1600px] shrink-0 flex-col pl-[12px] pt-[12px]">
              <div className="flex gap-[13px]">
                <div className="flex w-[781px] flex-col gap-[12px]">
                  <div className="flex justify-between">
                    <SwitchCard id="a" title="LED Switch" />
                    <SwitchCard id="b" title="LED Blink Switch" small />
                    <SwitchCard id="c" title="FAN Switch" />
                  </div>
                  <div className="flex justify-between">
                    <EntitiesCard />
                    <FanCard />
                  </div>
                </div>
                <MapCard />
              </div>
              <div className="mt-[78px] flex justify-between pr-[13px]">
                <TempCard />
                <div className="flex gap-[12px]">
                  <ChartCard title="Line chart Temperature & Humidity" legend="Temperature" />
                  <ChartCard title="Line chart Light Value" legend="Light Value" yellow />
                </div>
              </div>
            </div>
            <div className="ml-auto h-[185px] w-[5px] bg-[#cfcfcf]" />
          </div>
        </main>
      </div>
      <div className="h-px shrink-0 bg-[#9dbac8]" />
      <div className="h-px shrink-0 bg-[#d3eef2]" />
    </div>
  );
}
